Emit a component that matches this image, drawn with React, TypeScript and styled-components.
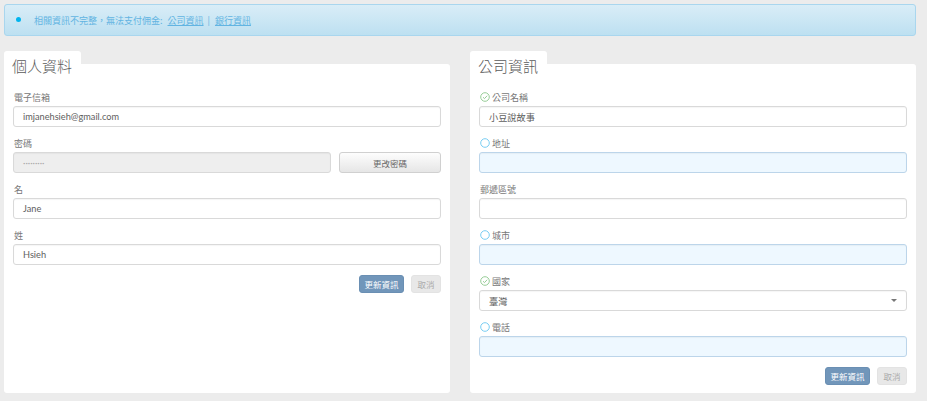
import React from 'react';
import styled, { createGlobalStyle } from 'styled-components';

const GlobalStyle = createGlobalStyle`
	html, body {
		margin: 0;
		padding: 0;
		background: #ececec;
	}
	body {
		font-family: Lato, "Noto Sans CJK TC", sans-serif;
		color: #555;
	}
`;

const Page = styled.div`
	width: 912px;
	padding: 4px 0 7px 4px;
`;

const Alert = styled.div`
	display: flex;
	align-items: center;
	height: 30px;
	padding-left: 11px;
	border: 1px solid #a9d6ee;
	border-radius: 3px;
	background: linear-gradient(to bottom, #d9edf7, #bde0f1);
	font-size: 9px;
	color: #62b4e2;
	font-family: "Noto Sans CJK TC", sans-serif;
`;

const Dot = styled.span`
	width: 5px;
	height: 5px;
	border-radius: 50%;
	background: #00b4ef;
	margin-right: 13px;
	margin-top: -2px;
`;

const AlertLink = styled.a`
	color: #62b4e2;
	text-decoration: underline;
	margin: 0 4px 0 5px;
`;

const Columns = styled.div`
	display: grid;
	grid-template-columns: 446px 446px;
	gap: 20px;
	margin-top: 15px;
`;

const Card = styled.section`
	display: flex;
	flex-direction: column;
`;

const Tab = styled.h2`
	position: relative;
	z-index: 1;
	align-self: flex-start;
	width: 77px;
	box-sizing: border-box;
	margin: 0;
	padding: 5px 0 0 8px;
	height: 25px;
	line-height: 20px;
	background: #fff;
	border-radius: 3px 3px 0 0;
	font-size: 15px;
	font-weight: 300;
	color: #5a5a5a;
	font-family: "Noto Sans CJK TC", sans-serif;
`;

const Panel = styled.div`
	flex: 1;
	margin-top: -12px;
	padding: 28px 9px 8px;
	background: #fff;
	border-radius: 0 3px 3px 3px;
`;

const Group = styled.div`
	margin-bottom: 11px;
`;

const Label = styled.label`
	display: flex;
	align-items: center;
	height: 10px;
	margin: 0 0 4px 1px;
	font-size: 9px;
	color: #777;
	font-family: "Noto Sans CJK TC", sans-serif;
`;

const StatusIcon = styled.svg`
	width: 10px;
	height: 10px;
	margin-right: 2px;
	flex: none;
`;

const Input = styled.div<{ $tone?: 'blue' | 'disabled' }>`
	box-sizing: border-box;
	height: 21px;
	display: flex;
	align-items: center;
	padding: 0 9px;
	border: 1px solid ${(p) => (p.$tone === 'blue' ? '#bcd5ea' : '#d9d9d9')};
	border-radius: 3px;
	background: ${(p) =>
		p.$tone === 'blue' ? '#eef8ff' : p.$tone === 'disabled' ? '#eeeeee' : '#fff'};
	box-shadow: inset 0 1px 1px rgba(0, 0, 0, 0.04);
	font-size: 9.2px;
	color: ${(p) => (p.$tone === 'disabled' ? '#aaa' : '#5e5e5e')};
	font-family: Lato, "Noto Sans CJK TC", sans-serif;
`;

const SelectBox = styled(Input)`
	justify-content: space-between;
	padding-right: 9px;
`;

const Caret = styled.span`
	width: 0;
	height: 0;
	border-left: 3px solid transparent;
	border-right: 3px solid transparent;
	border-top: 3px solid #777;
`;

const PasswordRow = styled.div`
	display: grid;
	grid-template-columns: 1fr 102px;
	gap: 8px;
`;

const GhostButton = styled.button`
	height: 21px;
	border: 1px solid #d0d0d0;
	border-radius: 3px;
	background: linear-gradient(to bottom, #fdfdfd, #e6e6e6);
	font-size: 8.5px;
	color: #666;
	font-family: "Noto Sans CJK TC", sans-serif;
	padding: 0;
`;

const Actions = styled.div`
	display: flex;
	justify-content: flex-end;
	gap: 7px;
	margin-top: -1px;
`;

const ActionButton = styled.button<{ $primary?: boolean }>`
	height: 18px;
	padding: 0;
	width: ${(p) => (p.$primary ? '45px' : '30px')};
	border: 1px solid ${(p) => (p.$primary ? '#6a8fb3' : '#e3e3e3')};
	border-radius: 3px;
	background: ${(p) => (p.$primary ? '#7196ba' : '#e8e8e8')};
	color: ${(p) => (p.$primary ? '#fff' : '#aaa')};
	font-size: 8.5px;
	font-family: "Noto Sans CJK TC", sans-serif;
`;

const Check = () => (
	<StatusIcon viewBox="0 0 10 10">
		<circle cx="5" cy="5" r="4.3" fill="none" stroke="#8cc78c" strokeWidth="0.9" />
		<path d="M3 5.2 L4.5 6.6 L7.2 3.7" fill="none" stroke="#8cc78c" strokeWidth="0.9" />
	</StatusIcon>
);

const Pending = () => (
	<StatusIcon viewBox="0 0 10 10">
		<circle cx="5" cy="5" r="4.3" fill="none" stroke="#78cdf3" strokeWidth="1" />
	</StatusIcon>
);

type Field = {
	label: string;
	value?: string;
	status?: 'ok' | 'todo';
	select?: boolean;
};

const companyFields: Field[] = [
	{ label: '公司名稱', value: '小豆說故事', status: 'ok' },
	{ label: '地址', status: 'todo' },
	{ label: '郵遞區號' },
	{ label: '城市', status: 'todo' },
	{ label: '國家', value: '臺灣', status: 'ok', select: true },
	{ label: '電話', status: 'todo' },
];

const App: React.FC = () => {
	return (
		<Page>
			<GlobalStyle />
			<Alert>
				<Dot />
				<span>相關資訊不完整，無法支付佣金:</span>
				<AlertLink>公司資訊</AlertLink>|
				<AlertLink>銀行資訊</AlertLink>
			</Alert>
			<Columns>
				<Card>
					<Tab>個人資料</Tab>
					<Panel>
						<Group>
							<Label>電子信箱</Label>
							<Input>imjanehsieh@gmail.com</Input>
						</Group>
						<Group>
							<Label>密碼</Label>
							<PasswordRow>
								<Input $tone="disabled">·········</Input>
								<GhostButton>更改密碼</GhostButton>
							</PasswordRow>
						</Group>
						<Group>
							<Label>名</Label>
							<Input>Jane</Input>
						</Group>
						<Group>
							<Label>姓</Label>
							<Input>Hsieh</Input>
						</Group>
						<Actions>
							<ActionButton $primary>更新資訊</ActionButton>
							<ActionButton>取消</ActionButton>
						</Actions>
					</Panel>
				</Card>
				<Card>
					<Tab>公司資訊</Tab>
					<Panel>
						{companyFields.map((f) => (
							<Group key={f.label}>
								<Label>
									{f.status === 'ok' && <Check />}
									{f.status === 'todo' && <Pending />}
									{f.label}
								</Label>
								{f.select ? (
									<SelectBox>
										{f.value}
										<Caret />
									</SelectBox>
								) : (
									<Input $tone={f.status === 'todo' ? 'blue' : undefined}>
										{f.value}
									</Input>
								)}
							</Group>
						))}
						<Actions>
							<ActionButton $primary>更新資訊</ActionButton>
							<ActionButton>取消</ActionButton>
						</Actions>
					</Panel>
				</Card>
			</Columns>
		</Page>
	);
};

export default App;
